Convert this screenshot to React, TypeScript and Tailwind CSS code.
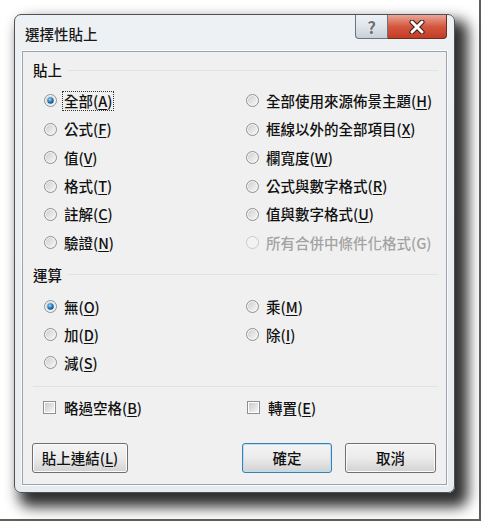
import React from "react";

type Lbl = { a: string; u?: string; b?: string };

function RadioIcon({ checked, disabled }: { checked?: boolean; disabled?: boolean }) {
  return (
    <svg width="13" height="13" viewBox="0 0 13 13" className="shrink-0">
      <defs>
        <linearGradient id="rin" x1="0" y1="0" x2="1" y2="1">
          <stop offset="0" stopColor="#cfcfcf" />
          <stop offset="1" stopColor="#f7f7f7" />
        </linearGradient>
        <radialGradient id="rdot" cx="0.4" cy="0.35" r="0.7">
          <stop offset="0" stopColor="#9fd7f8" />
          <stop offset="0.5" stopColor="#2c86c9" />
          <stop offset="1" stopColor="#0c3f7a" />
        </radialGradient>
      </defs>
      <circle cx="6.5" cy="6.5" r="6" fill="#f4f4f4" stroke={disabled ? "#c8c8c8" : "#8e8f8f"} strokeWidth="1" />
      <circle cx="6.5" cy="6.5" r="4.5" fill={disabled ? "#f2f2f2" : "url(#rin)"} />
      {checked && <circle cx="6.5" cy="6.5" r="3.2" fill="url(#rdot)" />}
    </svg>
  );
}

function CheckIcon() {
  return (
    <span className="w-[13px] h-[13px] shrink-0 border border-[#8e8f8f] bg-white p-[1px] flex">
      <span className="flex-1 bg-gradient-to-br from-[#cbcbcb] to-[#f6f6f6]" />
    </span>
  );
}

function Text({ l, disabled }: { l: Lbl; disabled?: boolean }) {
  return (
    <span className={disabled ? "text-[#a3a3a3]" : "text-[#111]"}>
      {l.a}
      {l.u && <span className={disabled ? "" : "underline underline-offset-2"}>{l.u}</span>}
      {l.b}
    </span>
  );
}

function Radio({ l, checked, disabled, focus }: { l: Lbl; checked?: boolean; disabled?: boolean; focus?: boolean }) {
  return (
    <div className="flex items-center h-[28.4px]">
      <RadioIcon checked={checked} disabled={disabled} />
      {focus ? (
        <span className="ml-[5px] border border-dotted border-[#333] px-[1px] h-[20px] flex items-center">
          <Text l={l} disabled={disabled} />
        </span>
      ) : (
        <span className="ml-[7px]">
          <Text l={l} disabled={disabled} />
        </span>
      )}
    </div>
  );
}

function Check({ l }: { l: Lbl }) {
  return (
    <div className="flex items-center h-[28px]">
      <CheckIcon />
      <span className="ml-[8px]">
        <Text l={l} />
      </span>
    </div>
  );
}

function SectionLabel({ t }: { t: string }) {
  return (
    <div className="flex items-center h-[20px] -mr-[2px]">
      <span className="text-[#111]">{t}</span>
      <div className="flex-1 ml-[6px] h-px bg-[#dde3ea]" />
    </div>
  );
}

function Btn({ children, def, w }: { children: React.ReactNode; def?: boolean; w: string }) {
  return (
    <div
      className={
        "h-[30px] rounded-[3px] border flex items-center justify-center bg-gradient-to-b from-[#f4f4f4] via-[#ebebeb] to-[#d2d2d2] " +
        w +
        (def
          ? " border-[#3c7fb1] shadow-[inset_0_0_0_1px_#b5e0f6]"
          : " border-[#707070] shadow-[inset_0_0_0_1px_#fbfbfb]")
      }
    >
      {children}
    </div>
  );
}

export default function App() {
  return (
    <div className="w-[484px] h-[523px] bg-white font-['Noto_Sans_CJK_TC',sans-serif] font-medium text-[14.5px] leading-none">
      <div className="w-[481px] h-[521px] border-r-2 border-b-2 border-[#5d6158] bg-white pt-[14px] pl-[14px]">
        <div className="w-[441px] h-[479px] rounded-[7px] border border-[#4d5258] bg-gradient-to-b from-[#eef1f4] to-[#e9ecef] shadow-[9px_10px_14px_4px_rgba(0,0,0,0.82)] flex flex-col">
          {/* title bar */}
          <div className="h-[36px] flex items-start justify-between">
            <div className="pl-[10px] pt-[12px] text-[#1a1a1a]">選擇性貼上</div>
            <div className="flex mr-[7px]">
              <div className="w-[33px] h-[24px] rounded-bl-[4px] border border-t-0 border-[#6a737e] bg-gradient-to-b from-[#eef1f4] via-[#dfe4e9] to-[#c9d0d7] flex items-center justify-center">
                <span className="text-[17px] font-bold text-[#6b7179] [text-shadow:0_0_2px_#fff]">?</span>
              </div>
              <div className="w-[59px] h-[24px] rounded-br-[4px] border border-l-0 border-t-0 border-[#6b2c22] bg-gradient-to-b from-[#e9a697] via-[#d4573f] to-[#c23c26] flex items-center justify-center">
                <svg width="18" height="14" viewBox="0 0 18 14">
                  <path d="M4 2 L14 12 M14 2 L4 12" stroke="#3b1a14" strokeWidth="5" strokeLinecap="round" />
                  <path d="M4 2 L14 12 M14 2 L4 12" stroke="#ffffff" strokeWidth="3" strokeLinecap="round" />
                </svg>
              </div>
            </div>
          </div>
          {/* client panel */}
          <div className="mx-[7px] h-[434px] border border-[#9aa4ae] bg-[#f0f0f0] shadow-[0_0_0_1px_#fafbfc] px-[10px] pt-[8px]">
            <SectionLabel t="貼上" />
            <div className="grid grid-cols-[202px_1fr] grid-flow-col grid-rows-6 pl-[11px] mt-[6.8px]">
              <Radio l={{ a: "全部(", u: "A", b: ")" }} checked focus />
              <Radio l={{ a: "公式(", u: "F", b: ")" }} />
              <Radio l={{ a: "值(", u: "V", b: ")" }} />
              <Radio l={{ a: "格式(", u: "T", b: ")" }} />
              <Radio l={{ a: "註解(", u: "C", b: ")" }} />
              <Radio l={{ a: "驗證(", u: "N", b: ")" }} />
              <Radio l={{ a: "全部使用來源佈景主題(", u: "H", b: ")" }} />
              <Radio l={{ a: "框線以外的全部項目(", u: "X", b: ")" }} />
              <Radio l={{ a: "欄寬度(", u: "W", b: ")" }} />
              <Radio l={{ a: "公式與數字格式(", u: "R", b: ")" }} />
              <Radio l={{ a: "值與數字格式(", u: "U", b: ")" }} />
              <Radio l={{ a: "所有合併中條件化格式(G)" }} disabled />
            </div>
            <div className="mt-[7.8px]">
              <SectionLabel t="運算" />
            </div>
            <div className="grid grid-cols-[202px_1fr] pl-[11px] mt-[8px] [&>div]:h-[28px]">
              <Radio l={{ a: "無(", u: "O", b: ")" }} checked />
              <Radio l={{ a: "乘(", u: "M", b: ")" }} />
              <Radio l={{ a: "加(", u: "D", b: ")" }} />
              <Radio l={{ a: "除(", u: "I", b: ")" }} />
              <Radio l={{ a: "減(", u: "S", b: ")" }} />
            </div>
            <div className="mt-[9px] h-px bg-[#dde3ea] -mr-[2px]" />
            <div className="grid grid-cols-[204px_1fr] pl-[10px] mt-[7px]">
              <Check l={{ a: "略過空格(", u: "B", b: ")" }} />
              <Check l={{ a: "轉置(", u: "E", b: ")" }} />
            </div>
            <div className="flex mt-[21px] -ml-[1px]">
              <Btn w="w-[96px]">
                <Text l={{ a: "貼上連結(", u: "L", b: ")" }} />
              </Btn>
              <div className="flex-1" />
              <Btn w="w-[90px]" def>
                <span className="text-[#111]">確定</span>
              </Btn>
              <div className="w-[13px]" />
              <Btn w="w-[91px]">
                <span className="text-[#111]">取消</span>
              </Btn>
            </div>
          </div>
        </div>
      </div>
    </div>
  );
}
